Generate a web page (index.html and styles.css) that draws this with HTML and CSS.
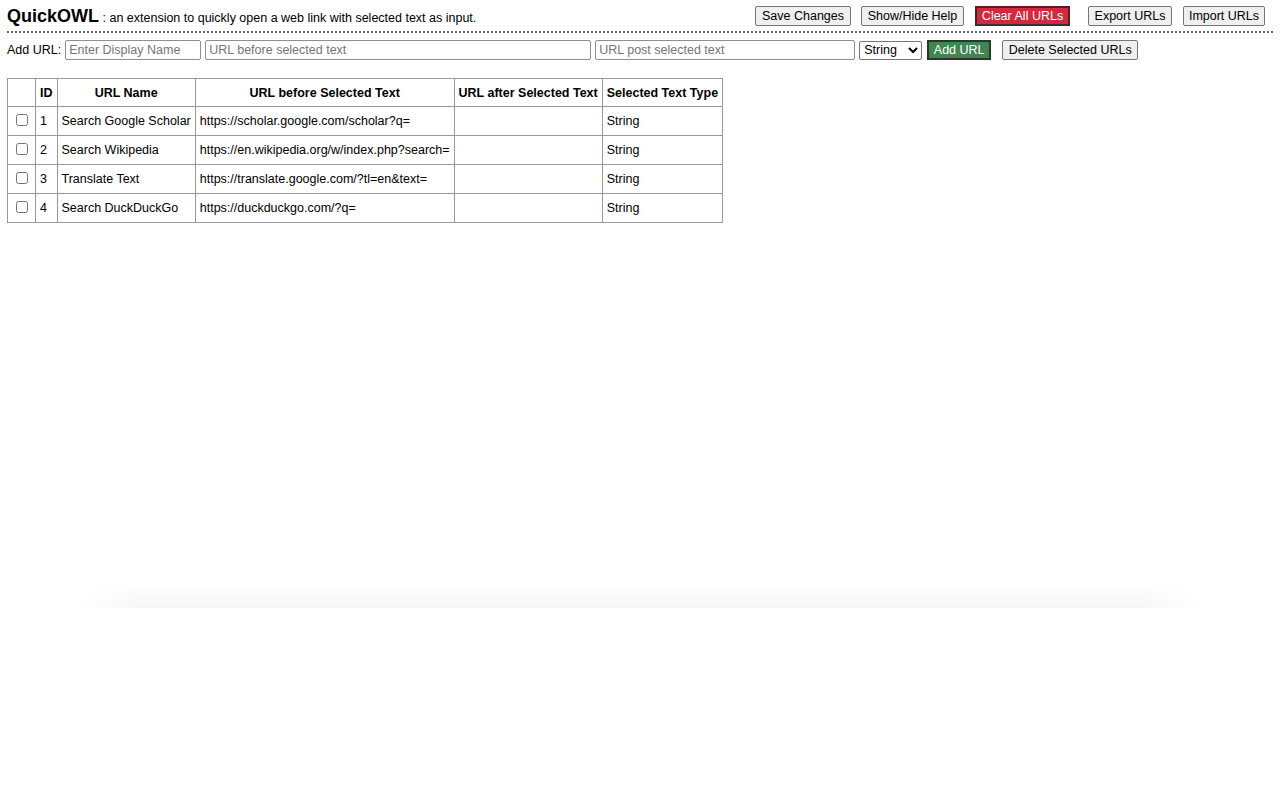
FILE: index.html
```html
<!DOCTYPE html>
<html lang="en">
  <head>
    <meta charset="UTF-8" />
    <title>QuickOWL Options</title>
    <link rel="stylesheet" href="styles.css">
  </head>
  <body>
    <header class="top-bar">
      <div class="title">
        <span class="logo">QuickOWL</span> : an extension to quickly open a web link with selected text as input.
      </div>
      <div class="actions">
        <button class="btn save-btn">Save Changes</button>
        <button class="btn help-btn">Show/Hide Help</button>
        <button class="btn clear-btn">Clear All URLs</button>
        <button class="btn export-btn">Export URLs</button>
        <button class="btn import-btn">Import URLs</button>
      </div>
    </header>

    <div class="add-row">
      <label class="add-label">Add URL:</label>
      <input type="text" class="field name-field" placeholder="Enter Display Name">
      <input type="text" class="field pre-field" placeholder="URL before selected text">
      <input type="text" class="field post-field" placeholder="URL post selected text">
      <select class="type-select">
        <option>String</option>
        <option>Number</option>
      </select>
      <button class="btn add-btn">Add URL</button>
      <button class="btn delete-btn">Delete Selected URLs</button>
    </div>

    <table class="url-table">
      <thead>
        <tr>
          <th class="col-check"></th>
          <th class="col-id">ID</th>
          <th>URL Name</th>
          <th>URL before Selected Text</th>
          <th>URL after Selected Text</th>
          <th>Selected Text Type</th>
        </tr>
      </thead>
      <tbody id="url-body">
        <tr>
          <td class="col-check"><input type="checkbox"></td>
          <td>1</td>
          <td>Search Google Scholar</td>
          <td>https://scholar.google.com/scholar?q=</td>
          <td></td>
          <td>String</td>
        </tr>
        <tr>
          <td class="col-check"><input type="checkbox"></td>
          <td>2</td>
          <td>Search Wikipedia</td>
          <td>https://en.wikipedia.org/w/index.php?search=</td>
          <td></td>
          <td>String</td>
        </tr>
        <tr>
          <td class="col-check"><input type="checkbox"></td>
          <td>3</td>
          <td>Translate Text</td>
          <td>https://translate.google.com/?tl=en&amp;text=</td>
          <td></td>
          <td>String</td>
        </tr>
        <tr>
          <td class="col-check"><input type="checkbox"></td>
          <td>4</td>
          <td>Search DuckDuckGo</td>
          <td>https://duckduckgo.com/?q=</td>
          <td></td>
          <td>String</td>
        </tr>
      </tbody>
    </table>

    <div class="fade-shadow"></div>
  </body>
</html>
```

FILE: styles.css
```css
* {
  box-sizing: border-box;
}

body {
  margin: 0;
  padding: 0 7px;
  font-family: "Liberation Sans", Arial, sans-serif;
  font-size: 12.5px;
  color: #000;
  background: #fff;
}

.top-bar {
  display: flex;
  justify-content: space-between;
  align-items: center;
  height: 33px;
  padding-top: 1px;
  border-bottom: 2px dotted #666;
}

.title {
  font-size: 12.5px;
  padding-top: 1px;
}

.logo {
  font-size: 18px;
  font-weight: bold;
}

.actions {
  display: flex;
  align-items: center;
  padding-right: 8px;
  padding-bottom: 1px;
}

.btn {
  height: 20px;
  padding: 0;
  font-family: "Liberation Sans", Arial, sans-serif;
  font-size: 12.5px;
  white-space: nowrap;
  color: #000;
  background: #efefef;
  border: 1px solid #767676;
  border-radius: 2px;
}

.save-btn {
  width: 96px;
}

.help-btn {
  width: 103px;
  margin-left: 10px;
}

.clear-btn {
  width: 95px;
  margin-left: 11px;
  color: #fff;
  background: #d2293e;
  border: 2px solid #333;
  border-top-color: #5a1a22;
  border-left-color: #5a1a22;
  border-radius: 0;
}

.export-btn {
  width: 84px;
  margin-left: 18px;
}

.import-btn {
  width: 82px;
  margin-left: 11px;
}

.add-row {
  display: flex;
  align-items: center;
  height: 20px;
  margin-top: 7px;
}

.add-label {
  margin-right: 4px;
}

.field {
  height: 20px;
  margin-right: 4px;
  padding: 0 3px;
  font-family: "Liberation Sans", Arial, sans-serif;
  font-size: 12.5px;
  border: 1px solid #8f8f8f;
  border-radius: 2px;
}

.field::placeholder {
  color: #757575;
}

.name-field {
  width: 136px;
}

.pre-field {
  width: 386px;
}

.post-field {
  width: 260px;
}

.type-select {
  width: 63px;
  height: 19px;
  margin-right: 5px;
  font-family: "Liberation Sans", Arial, sans-serif;
  font-size: 12.5px;
  background: #fff;
  border: 1px solid #767676;
  border-radius: 2px;
}

.add-btn {
  width: 64px;
  color: #fff;
  background: #3f8650;
  border: 2px solid #333;
  border-top-color: #1f3d26;
  border-left-color: #1f3d26;
  border-radius: 0;
}

.delete-btn {
  width: 136px;
  margin-left: 11px;
}

.url-table {
  margin-top: 18px;
  border-collapse: collapse;
  border: 1px solid #999;
}

.url-table th,
.url-table td {
  height: 29px;
  padding: 0 4px;
  border: 1px solid #999;
  text-align: left;
  white-space: nowrap;
}

.url-table th {
  height: 28px;
  font-weight: bold;
  text-align: center;
}

.url-table .col-check {
  width: 28px;
  text-align: center;
  padding: 0;
}

.col-check input {
  width: 12px;
  height: 12px;
  margin: 0 0 2px;
  vertical-align: middle;
}

.fade-shadow {
  height: 24px;
  margin: 361px 73px 0;
  background: linear-gradient(to bottom, rgba(0, 0, 0, 0), rgba(0, 0, 0, 0.035));
  -webkit-mask-image: linear-gradient(to right, transparent, #000 5%, #000 95%, transparent);
}
```
